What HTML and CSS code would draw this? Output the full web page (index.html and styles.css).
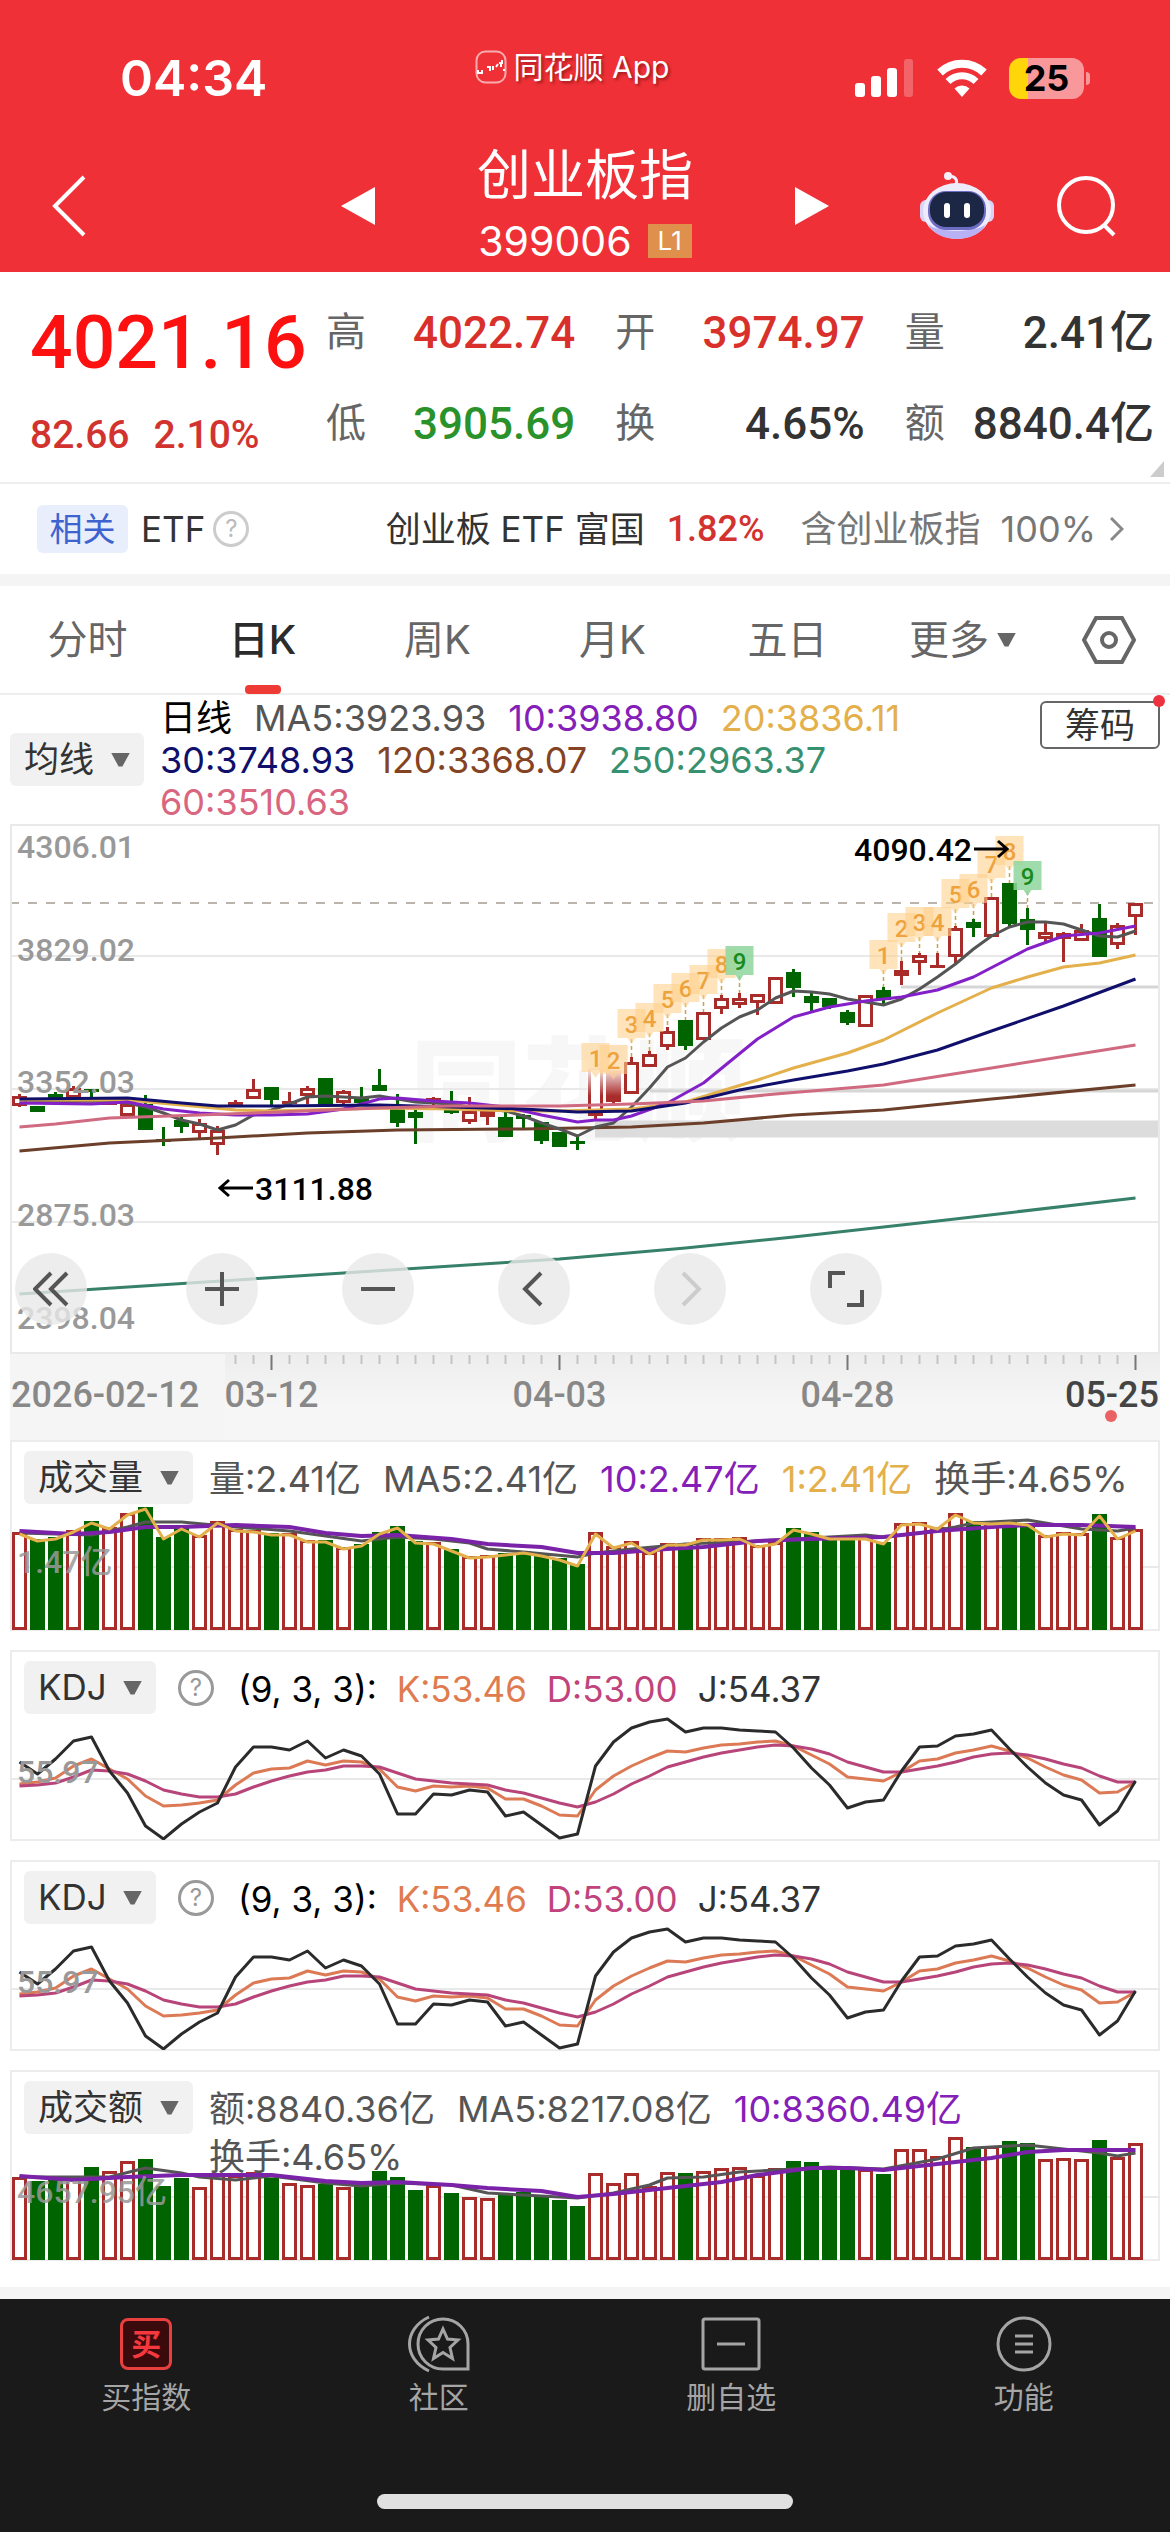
FILE: index.html
```html
<!DOCTYPE html>
<html lang="zh-CN">
<head>
    <meta charset="UTF-8">
    <meta name="viewport" content="width=device-width, initial-scale=1.0">
    <title>创业板指 399006</title>
    <link rel="stylesheet" href="styles.css">
</head>
<body>
    <header class="header">
        <div class="status-bar">
            <span class="time">04:34</span>
            <span class="app-name">
                <svg width="33" height="34" viewBox="0 0 33 34" fill="none">
                    <rect x="1.5" y="1.5" width="29" height="31" rx="9" stroke="#fff" stroke-opacity=".6" stroke-width="2"/>
                    <path d="M3 20v3h4v-3M12 17h3v4M18 16v4M21 17l2-3M24 13h3v-3M26 12v5M28 20h2" stroke="#fff" stroke-width="2"/>
                </svg>
                同花顺 App
            </span>
            <span class="status-icons">
                <svg width="60" height="38" viewBox="0 0 60 38" fill="#fff">
                    <rect x="0" y="24" width="10" height="14" rx="3"/>
                    <rect x="16" y="17" width="10" height="21" rx="3"/>
                    <rect x="32" y="9" width="10" height="29" rx="3"/>
                    <rect x="49" y="0" width="9" height="38" rx="3" fill-opacity=".25"/>
                </svg>
                <svg width="50" height="38" viewBox="0 0 50 38">
                    <path d="M3 13.5a32 32 0 0 1 44 0" fill="none" stroke="#fff" stroke-width="8"/>
                    <path d="M11 22.5a20 20 0 0 1 28 0" fill="none" stroke="#fff" stroke-width="7"/>
                    <path d="M17.500 29.500a11 11 0 0 1 15 0L25 38z" fill="#fff"/>
                </svg>
                <span class="battery">25</span>
            </span>
        </div>
        <nav class="title-bar">
            <button class="back" aria-label="返回">
                <svg width="34" height="62" viewBox="0 0 34 62" fill="none" stroke="#fff" stroke-width="4"><path d="M32 2L3 31l29 29"/></svg>
            </button>
            <button aria-label="上一个">
                <svg width="34" height="38" viewBox="0 0 34 38" fill="#fff"><path d="M34 0v38L0 19z"/></svg>
            </button>
            <div class="title">
                <h1>创业板指</h1>
                <p>399006 <span class="level">L1</span></p>
            </div>
            <button aria-label="下一个">
                <svg width="34" height="38" viewBox="0 0 34 38" fill="#fff"><path d="M0 0v38l34-19z"/></svg>
            </button>
            <div class="actions">
                <button class="robot" aria-label="智能助手">
                    <svg width="74" height="68" viewBox="0 0 74 68">
                        <path d="M35 14c4-6 0-10-7-10" fill="none" stroke="#f3eefc" stroke-width="3"/>
                        <circle cx="28" cy="4" r="4" fill="#f6f0fb"/>
                        <rect x="0" y="28" width="12" height="22" rx="6" fill="#d9d4f7"/>
                        <rect x="62" y="28" width="12" height="22" rx="6" fill="#d9d4f7"/>
                        <ellipse cx="37" cy="39" rx="34" ry="28" fill="#eeebfd"/>
                        <path d="M8 52c10 20 48 20 58 0-8 9-50 9-58 0z" fill="#b9b1f5"/>
                        <rect x="8" y="19" width="58" height="39" rx="18" fill="#6d6cc4"/>
                        <rect x="10" y="20" width="54" height="35" rx="16" fill="#1b2744"/>
                        <rect x="24" y="31" width="6" height="15" rx="3" fill="#fff"/>
                        <rect x="44" y="31" width="6" height="15" rx="3" fill="#fff"/>
                    </svg>
                </button>
                <button aria-label="搜索">
                    <svg width="62" height="62" viewBox="0 0 62 62" fill="none" stroke="#fff" stroke-width="4"><circle cx="30" cy="30" r="27"/><path d="M47 49l11 11"/></svg>
                </button>
            </div>
        </nav>
    </header>

    <main>
        <section class="quote">
            <div class="price">
                <strong>4021.16</strong>
                <p><span>82.66</span><span>2.10%</span></p>
            </div>
            <dl>
                <div><dt>高</dt><dd class="up">4022.74</dd></div>
                <div><dt>开</dt><dd class="up">3974.97</dd></div>
                <div><dt>量</dt><dd>2.41亿</dd></div>
                <div><dt>低</dt><dd class="down">3905.69</dd></div>
                <div><dt>换</dt><dd>4.65%</dd></div>
                <div><dt>额</dt><dd>8840.4亿</dd></div>
            </dl>
        </section>

        <section class="related">
            <span class="chip">相关</span>
            <span class="etf">ETF</span>
            <span class="help help-light">?</span>
            <a href="#etf" class="related-link">
                <span>创业板 ETF 富国</span>
                <span class="rise">1.82%</span>
                <span class="weight">含创业板指</span>
                <span class="weight percent">100%</span>
                <svg width="14" height="26" viewBox="0 0 14 26" fill="none" stroke="#888" stroke-width="3"><path d="M1 2l11 11L1 24"/></svg>
            </a>
        </section>

        <nav class="tabs">
            <button>分时</button>
            <button class="active">日K</button>
            <button>周K</button>
            <button>月K</button>
            <button>五日</button>
            <button class="more">更多</button>
            <button class="setting" aria-label="设置">
                <svg width="54" height="48" viewBox="0 0 54 48" fill="none" stroke="#666" stroke-width="4"><path d="M14 2h26l12 22-12 22H14L2 24z"/><circle cx="27" cy="24" r="7"/></svg>
            </button>
        </nav>

        <section class="ma-bar">
            <label class="picker"><select aria-label="主图指标"><option>均线</option></select></label>
            <p class="legend ma-legend">
                <span class="c-black">日线</span>
                <span class="c-gray">MA5:3923.93</span>
                <span class="c-purple">10:3938.80</span>
                <span class="c-yellow">20:3836.11</span>
                <span class="c-navy">30:3748.93</span>
                <span class="c-brown">120:3368.07</span>
                <span class="c-green">250:2963.37</span>
                <span class="c-pink">60:3510.63</span>
            </p>
            <button class="chips-btn">筹码</button>
        </section>

        <section class="kline">
            <svg id="kline" viewBox="0 0 1150 530"></svg>
            <div class="tools">
                <button aria-label="收起"><svg width="36" height="36" viewBox="0 0 36 36"><path d="M18 2L2 18l16 16M34 2L18 18l16 16"/></svg></button>
                <button aria-label="放大"><svg width="36" height="36" viewBox="0 0 36 36"><path d="M18 1v34M1 18h34"/></svg></button>
                <button aria-label="缩小"><svg width="36" height="36" viewBox="0 0 36 36"><path d="M1 18h34"/></svg></button>
                <button aria-label="左移"><svg width="36" height="36" viewBox="0 0 36 36"><path d="M25 2L9 18l16 16"/></svg></button>
                <button aria-label="右移" disabled><svg width="36" height="36" viewBox="0 0 36 36"><path d="M11 2l16 16-16 16"/></svg></button>
                <button aria-label="全屏"><svg width="36" height="36" viewBox="0 0 36 36"><path d="M2 17V2h15M34 19v15H19"/></svg></button>
            </div>
        </section>
        <div class="axis"><svg id="axis" viewBox="0 0 1150 86"></svg></div>

        <section class="panel">
            <svg id="volume" class="plot" viewBox="0 0 1150 190"></svg>
            <div class="panel-head">
                <label class="picker"><select aria-label="副图指标一"><option>成交量</option></select></label>
                <p class="legend">
                    <span class="c-gray">量:2.41亿</span>
                    <span class="c-gray">MA5:2.41亿</span>
                    <span class="c-purple">10:2.47亿</span>
                    <span class="c-yellow">1:2.41亿</span>
                    <span class="c-gray">换手:4.65%</span>
                </p>
            </div>
        </section>

        <section class="panel">
            <svg class="plot kdj" viewBox="0 0 1150 190"></svg>
            <div class="panel-head">
                <label class="picker"><select aria-label="副图指标二"><option>KDJ</option></select></label>
                <span class="help">?</span>
                <p class="legend kdj-legend">
                    <span class="c-black">(9, 3, 3):</span>
                    <span class="c-orange">K:53.46</span>
                    <span class="c-rose">D:53.00</span>
                    <span class="c-dark">J:54.37</span>
                </p>
            </div>
        </section>

        <section class="panel">
            <svg class="plot kdj" viewBox="0 0 1150 190"></svg>
            <div class="panel-head">
                <label class="picker"><select aria-label="副图指标三"><option>KDJ</option></select></label>
                <span class="help">?</span>
                <p class="legend kdj-legend">
                    <span class="c-black">(9, 3, 3):</span>
                    <span class="c-orange">K:53.46</span>
                    <span class="c-rose">D:53.00</span>
                    <span class="c-dark">J:54.37</span>
                </p>
            </div>
        </section>

        <section class="panel">
            <svg id="amount" class="plot" viewBox="0 0 1150 190"></svg>
            <div class="panel-head">
                <label class="picker"><select aria-label="副图指标四"><option>成交额</option></select></label>
                <p class="legend">
                    <span class="c-gray">额:8840.36亿</span>
                    <span class="c-gray">MA5:8217.08亿</span>
                    <span class="c-purple">10:8360.49亿</span>
                    <span class="c-gray">换手:4.65%</span>
                </p>
            </div>
        </section>
    </main>

    <footer class="footer">
        <nav>
            <a href="#buy">
                <span class="buy-icon">买</span>
                买指数
            </a>
            <a href="#community">
                <svg width="64" height="58" viewBox="0 0 64 58" fill="none" stroke="#a5a5a5" stroke-width="3">
                    <path d="M22 2C-4 14-4 44 22 56"/>
                    <path d="M36 4C22 4 11 15 11 29s11 25 25 25h25V29C61 15 50 4 36 4z"/>
                    <path d="M36 14l4.500 10 10.500 1-8 7.500 2.500 11-9.500-6-9.500 6 2.500-11-8-7.500 10.500-1z"/>
                </svg>
                社区
            </a>
            <a href="#remove">
                <svg width="60" height="58" viewBox="0 0 60 58" fill="none" stroke="#a5a5a5" stroke-width="3"><rect x="2" y="4" width="56" height="50" rx="2"/><path d="M16 29h28"/></svg>
                删自选
            </a>
            <a href="#features">
                <svg width="58" height="58" viewBox="0 0 58 58" fill="none" stroke="#a5a5a5" stroke-width="3"><circle cx="29" cy="29" r="26"/><path d="M20 21h18M20 29h18M20 37h18"/></svg>
                功能
            </a>
        </nav>
        <div class="home-bar"></div>
    </footer>
    <script src="script.js"></script>
</body>
</html>
```

FILE: styles.css
```css
* {
    box-sizing: border-box;
}
body {
    margin: 0;
    font-family: Inter, "Noto Sans CJK SC", sans-serif;
    background-color: #fff;
    color: #333;
}
h1, p, dl, dd {
    margin: 0;
}
button, select {
    font: inherit;
    color: inherit;
    background: none;
    border: none;
    padding: 0;
    cursor: pointer;
}
a {
    color: inherit;
    text-decoration: none;
}
svg {
    display: block;
}

/* 顶部 */
.header {
    background-color: #ef3137;
    color: #fff;
    height: 272px;
    padding-top: 52px;
}
.status-bar {
    display: grid;
    grid-template-columns: 1fr auto 1fr;
    height: 52px;
    padding: 0 86px 0 60px;
}
.time {
    padding-left: 60px;
    font-size: 50px;
    font-weight: 600;
    line-height: 52px;
}
.app-name {
    display: flex;
    gap: 6px;
    font-size: 30px;
    line-height: 30px;
    align-items: center;
    height: 30px;
    text-shadow: 2px 2px 3px rgba(80,0,0,0.5);
}
.status-icons {
    display: flex;
    justify-content: flex-end;
    align-items: center;
    gap: 22px;
}
.battery {
    position: relative;
    width: 75px;
    height: 41px;
    border-radius: 12px;
    background: linear-gradient(90deg, #ffd60a 26%, #f9989b 26%);
    color: #000;
    font-size: 36px;
    font-weight: 700;
    line-height: 41px;
    text-align: center;
}
.battery::after {
    content: "";
    position: absolute;
    right: -6px;
    top: 14px;
    width: 4px;
    height: 13px;
    border-radius: 0 4px 4px 0;
    background-color: #f9989b;
}
.title-bar {
    display: grid;
    grid-template-columns: 1fr 34px 420px 34px 1fr;
    align-items: center;
    height: 168px;
    padding: 36px 52px 0;
}
.title {
    text-align: center;
}
.title h1 {
    font-size: 54px;
    font-weight: 400;
    line-height: 70px;
}
.title p {
    display: flex;
    justify-content: center;
    align-items: center;
    gap: 16px;
    font-size: 41px;
    line-height: 60px;
}
.level {
    background-color: #e0904d;
    font-size: 26px;
    line-height: 34px;
    padding: 0 10px;
}
.actions {
    display: flex;
    justify-content: flex-end;
    align-items: center;
    gap: 62px;
}

/* 行情 */
.quote {
    position: relative;
    display: flex;
    gap: 24px;
    height: 212px;
    padding: 24px 16px 0 30px;
    border-bottom: 2px solid #eee;
    font-family: Roboto, "Noto Sans CJK SC", sans-serif;
    font-weight: 500;
}
.quote::after {
    content: "";
    position: absolute;
    right: 6px;
    bottom: 5px;
    width: 14px;
    height: 16px;
    background-color: #ccc;
    clip-path: polygon(100% 0, 100% 100%, 0 100%);
}
.price {
    width: 272px;
    color: #d2332f;
}
.price strong {
    display: block;
    font-size: 75px;
    font-weight: 500;
    line-height: 92px;
    color: #fc1010;
}
.price p {
    display: flex;
    gap: 24px;
    font-size: 39px;
    line-height: 94px;
}
.quote dl {
    flex: 1;
    display: grid;
    grid-template-columns: repeat(3, 1fr);
    grid-auto-rows: 91px;
    column-gap: 40px;
}
.quote dl div {
    display: flex;
    justify-content: space-between;
    line-height: 74px;
}
.quote dt {
    font-size: 40px;
    font-weight: 400;
    color: #666;
}
.quote dd {
    font-size: 44px;
    white-space: nowrap;
}
.quote .up {
    color: #d9302c;
}
.quote .down {
    color: #2a922a;
}

/* 相关ETF */
.related {
    display: flex;
    align-items: center;
    height: 90px;
    padding: 0 46px 0 37px;
    font-size: 35px;
    line-height: 48px;
}
.chip {
    background-color: #e8eefc;
    color: #3d63cf;
    border-radius: 6px;
    width: 91px;
    text-align: center;
    font-size: 33px;
}
.etf {
    margin-left: 13px;
}
.help {
    width: 36px;
    height: 36px;
    border: 3px solid #999;
    border-radius: 50%;
    color: #999;
    font-size: 24px;
    line-height: 30px;
    text-align: center;
}
.help-light {
    border-color: #ccc;
    color: #bbb;
    margin-left: 8px;
}
.related-link {
    margin-left: auto;
    display: flex;
    align-items: center;
    gap: 14px;
}
.related-link .rise {
    font-family: Roboto, sans-serif;
    font-size: 36px;
    font-weight: 500;
    color: #d2332f;
    margin: 0 22px 0 8px;
}
.weight {
    font-size: 36px;
    color: #777;
}
.percent {
    margin-left: 6px;
}

/* 周期 */
.tabs {
    display: grid;
    grid-template-columns: repeat(6, 1fr) 86px;
    align-items: center;
    height: 121px;
    padding-right: 34px;
    border-top: 12px solid #f4f4f4;
    border-bottom: 2px solid #eee;
    font-size: 40px;
    line-height: 60px;
    color: #666;
}
.tabs .active {
    position: relative;
    color: #2b2b2b;
    font-weight: 500;
}
.tabs .active::after {
    content: "";
    position: absolute;
    left: calc(50% - 18px);
    bottom: -24px;
    width: 36px;
    height: 9px;
    border-radius: 4px;
    background-color: #ee3b35;
}
.tabs .more {
    display: flex;
    align-items: center;
    justify-content: center;
    gap: 8px;
}
.tabs .setting {
    justify-self: end;
}
.tabs .more::after, .picker::after {
    content: "";
    width: 19px;
    height: 14px;
    background-color: #666;
    clip-path: polygon(0 0, 100% 0, 60% 100%, 40% 100%);
}

/* 指标图例 */
.picker {
    position: relative;
    flex: none;
    display: flex;
    align-items: center;
    background-color: #f1f1f1;
    border-radius: 6px;
    height: 53px;
}
.picker select {
    appearance: none;
    font-size: 35px;
    line-height: 53px;
    height: 53px;
    padding: 0 49px 0 14px;
    color: #333;
}
.picker::after {
    position: absolute;
    right: 14px;
    pointer-events: none;
}
.legend {
    display: flex;
    flex-wrap: wrap;
    column-gap: 22px;
    font-size: 36px;
    line-height: 48px;
    white-space: nowrap;
}
.ma-bar {
    display: flex;
    align-items: center;
    padding: 0 10px;
    height: 129px;
}
.ma-legend {
    flex: 1;
    margin: 0 30px 0 16px;
    line-height: 42px;
}
.kdj-legend {
    column-gap: 20px;
    font-size: 35px;
}
.chips-btn {
    position: relative;
    align-self: flex-start;
    margin-top: 6px;
    width: 120px;
    height: 48px;
    border: 2px solid #666;
    border-radius: 6px;
    font-size: 35px;
    line-height: 44px;
}
.chips-btn::after {
    content: "";
    position: absolute;
    right: -7px;
    top: -8px;
    width: 12px;
    height: 12px;
    border-radius: 50%;
    background-color: #ee3340;
}
.c-black { color: #000; }
.c-dark { color: #333; }
.c-gray { color: #555; }
.c-purple { color: #8420b8; }
.c-yellow { color: #e3b04b; }
.c-navy { color: #10106c; }
.c-brown { color: #844322; }
.c-green { color: #37906f; }
.c-pink { color: #d9657f; }
.c-orange { color: #e07b4f; }
.c-rose { color: #c0437b; }

/* 图表 */
.kline {
    position: relative;
    margin: 0 10px;
    outline: 2px solid #e9e9e9;
    outline-offset: -2px;
}
.kline > svg, .axis svg {
    width: 100%;
    height: auto;
}
.tools {
    position: absolute;
    left: 5px;
    bottom: 29px;
    display: flex;
    gap: 84px;
}
.tools button {
    width: 72px;
    height: 72px;
    border-radius: 50%;
    background-color: rgba(232,232,232,0.8);
    display: flex;
    align-items: center;
    justify-content: center;
}
.tools button:first-child {
    margin-right: 15px;
}
.tools svg {
    fill: none;
    stroke: #555;
    stroke-width: 4;
}
.tools button:disabled svg {
    stroke: #ccc;
}
.axis {
    margin: 0 10px;
    background: linear-gradient(#ededed, #f6f6f6 60%);
}
.panel {
    position: relative;
    margin: 0 10px 19px;
    min-height: 191px;
    border: 2px solid #ececec;
}
.plot {
    position: absolute;
    left: -2px;
    top: -2px;
    width: calc(100% + 4px);
}
.panel-head {
    position: relative;
    display: flex;
    align-items: flex-start;
    gap: 16px;
    padding: 9px 0 0 12px;
}
.panel-head .help {
    margin: 9px 8px 0 6px;
}
.panel-head .legend {
    padding-top: 4px;
}
text {
    font-family: Roboto, "Noto Sans CJK SC", sans-serif;
    font-weight: 500;
}

/* 底部 */
.footer {
    margin-top: 26px;
    border-top: 12px solid #f4f4f4;
    background-color: #1a1a1a;
    color: #a5a5a5;
    height: 246px;
    display: flex;
    flex-direction: column;
    justify-content: space-between;
    align-items: center;
    padding: 16px 0 24px;
}
.footer nav {
    width: 100%;
    display: grid;
    grid-template-columns: repeat(4, 1fr);
}
.footer a {
    display: flex;
    flex-direction: column;
    align-items: center;
    gap: 2px;
    font-size: 30px;
    line-height: 44px;
}
.buy-icon {
    width: 52px;
    height: 52px;
    margin: 3px 0;
    border: 3px solid #e8403f;
    border-radius: 8px;
    background-color: #3a0a0c;
    color: #f5383e;
    font-size: 30px;
    font-weight: 700;
    line-height: 46px;
    text-align: center;
}
.home-bar {
    width: 416px;
    height: 15px;
    border-radius: 8px;
    background-color: #e0e0e0;
}
```

FILE: script.js
```js
const NS = 'http://www.w3.org/2000/svg';
const STEP = 18;
const RED = '#a82c2a';
const GREEN = '#006400';
const GRAY = '#555';
const PURPLE = '#7a22a8';
const YELLOW = '#e3b04b';

// r = 涨, g = 跌
const COLORS = 'rggrgrrgggrrrrgrrgrgggg' + 'rgrrgggggrrrrrgrrrrrggggrgrrrrgrggrrrgrr';

// 每根K线: 最高, 实体上沿, 实体下沿, 最低
const candles = [
    [270, 272, 282, 283], [282, 282, 288, 288], [268, 270, 275, 275], [262, 264, 274, 274],
    [265, 265, 268, 273], [278, 278, 280, 281], [279, 280, 292, 293], [271, 280, 306, 306],
    [303, 315, 318, 322], [291, 296, 303, 309], [295, 299, 309, 314], [302, 306, 321, 331],
    [276, 278, 283, 283], [255, 265, 275, 275], [263, 263, 276, 281], [268, 277, 280, 281],
    [262, 264, 272, 280], [254, 254, 281, 281], [266, 267, 279, 281], [263, 273, 279, 279],
    [245, 261, 267, 267], [270, 283, 299, 303], [284, 288, 294, 320], [273, 274, 279, 285],
    [267, 286, 289, 290], [273, 287, 298, 300], [285, 287, 293, 301], [288, 293, 313, 313],
    [290, 291, 295, 304], [298, 298, 317, 320], [308, 308, 323, 323], [313, 317, 319, 326],
    [243, 243, 292, 296], [246, 246, 278, 280], [233, 238, 270, 270], [227, 230, 243, 243],
    [203, 207, 223, 226], [196, 196, 222, 226], [188, 188, 216, 216], [171, 174, 185, 190],
    [169, 174, 181, 184], [170, 170, 179, 191], [153, 153, 180, 180], [145, 148, 164, 173],
    [169, 172, 179, 189], [174, 174, 183, 185], [186, 188, 199, 201], [171, 171, 203, 203],
    [163, 166, 176, 181], [137, 146, 152, 161], [129, 131, 139, 151], [129, 141, 144, 144],
    [102, 104, 133, 139], [95, 98, 104, 113], [73, 73, 113, 113], [59, 59, 100, 103],
    [84, 95, 106, 121], [97, 108, 115, 118], [108, 109, 115, 138], [100, 106, 117, 117],
    [80, 94, 133, 133], [99, 101, 121, 125], [79, 79, 93, 111]
];

// 均线: [序号, y]
const ma = [
    ['#6b3f2a', [[0, 327], [5, 319], [11, 314], [16, 309], [21, 306], [28, 305], [34, 303], [38, 299], [43, 291], [48, 286], [54, 275], [62, 261]]],
    ['#37806a', [[0, 470], [18, 449], [30, 435], [37, 424], [43, 413], [51, 397], [62, 374]]],
    [GRAY, [[0, 279], [4, 277], [6, 279], [7, 283], [8, 289], [9, 296], [10, 300], [11, 306], [12, 301], [13, 291], [14, 286], [15, 280], [16, 273], [17, 272], [19, 274], [20, 272], [21, 275], [22, 278], [24, 280], [25, 283], [27, 287], [28, 292], [29, 299], [30, 305], [31, 312], [32, 303], [33, 299], [34, 283], [35, 264], [36, 243], [37, 234], [38, 218], [39, 204], [40, 193], [41, 186], [42, 174], [43, 167], [44, 168], [45, 170], [46, 175], [47, 178], [48, 181], [49, 175], [50, 165], [51, 153], [52, 140], [53, 125], [54, 112], [55, 103], [56, 98], [57, 98], [58, 100], [59, 106], [60, 112], [61, 113], [62, 107]]],
    [YELLOW, [[0, 276], [6, 276], [9, 281], [12, 286], [14, 287], [18, 285], [20, 284], [24, 285], [28, 287], [30, 287], [34, 285], [37, 278], [41, 256], [43, 244], [46, 229], [48, 216], [51, 189], [54, 164], [56, 153], [58, 143], [60, 139], [62, 131]]],
    ['#8420c8', [[0, 279], [4, 280], [6, 278], [8, 285], [10, 289], [12, 291], [14, 291], [16, 290], [18, 285], [20, 275], [21, 274], [23, 277], [25, 279], [27, 283], [29, 291], [31, 298], [32, 296], [33, 296], [34, 292], [36, 279], [38, 259], [41, 215], [43, 193], [45, 183], [47, 177], [49, 173], [51, 166], [53, 153], [56, 125], [58, 112], [60, 109], [62, 102]]],
    ['#10106c', [[0, 275], [6, 274], [9, 279], [11, 282], [14, 282], [20, 281], [24, 283], [28, 285], [31, 288], [34, 287], [37, 279], [40, 266], [43, 256], [46, 247], [48, 240], [51, 226], [54, 207], [58, 182], [62, 155]]],
    ['#d06a80', [[0, 303], [2, 300], [5, 294], [10, 291], [13, 289], [20, 284], [24, 282], [30, 282], [34, 280], [38, 277], [42, 270], [48, 261], [54, 244], [62, 221]]]
];

// 九转: 序号, 数字, 标签顶部
const turns = [
    [32, 1, 219], [33, 2, 221], [34, 3, 185], [35, 4, 179], [36, 5, 160], [37, 6, 149], [38, 7, 141], [39, 8, 125], [40, 9, 122],
    [48, 1, 116], [49, 2, 89], [50, 3, 83], [51, 4, 83], [52, 5, 55], [53, 6, 50], [54, 7, 25], [55, 8, 12], [56, 9, 37]
];

const volumeTops = [
    92, 99, 97, 90, 81, 87, 73, 67, 97, 87, 95, 81, 89, 90, 93, 93, 100, 100, 107, 104, 92,
    86, 101, 102, 109, 116, 115, 113, 111, 114, 118, 124, 92, 106, 101, 112, 103, 103, 98, 98, 97, 105,
    102, 88, 92, 97, 97, 97, 102, 83, 82, 87, 73, 81, 82, 81, 83, 95, 92, 93, 74, 97, 89
];
const volumeMa5 = [[0, 93], [4, 95], [6, 87], [7, 82], [9, 82], [12, 87], [15, 91], [19, 101], [21, 97], [23, 99], [25, 103], [26, 109], [28, 112], [31, 117], [32, 113], [34, 109], [37, 104], [41, 101], [45, 97], [47, 95], [48, 97], [50, 93], [52, 87], [53, 83], [56, 80], [59, 89], [61, 91], [62, 88]];
const volumeMa10 = [[0, 91], [3, 94], [5, 92], [7, 87], [9, 87], [12, 85], [15, 87], [17, 93], [19, 96], [21, 95], [24, 99], [26, 104], [29, 107], [31, 113], [33, 113], [36, 109], [38, 107], [41, 101], [44, 99], [48, 97], [51, 91], [54, 87], [56, 85], [59, 85], [62, 87]];

const amountTops = [
    107, 111, 109, 106, 97, 101, 91, 89, 116, 108, 117, 103, 105, 102, 108, 113, 115, 114, 117, 112, 101,
    107, 120, 115, 123, 127, 128, 124, 122, 126, 130, 136, 103, 113, 103, 116, 102, 103, 101, 98, 97, 105,
    98, 91, 92, 100, 100, 99, 104, 79, 79, 86, 67, 77, 76, 71, 73, 89, 88, 89, 70, 87, 73
];
const amountMa5 = [[0, 107], [5, 107], [7, 98], [9, 103], [10, 107], [12, 110], [14, 106], [17, 113], [19, 116], [21, 113], [24, 115], [26, 123], [29, 126], [31, 128], [33, 123], [35, 115], [36, 108], [38, 107], [40, 102], [42, 100], [45, 97], [48, 99], [51, 89], [53, 78], [56, 75], [58, 79], [60, 83], [61, 86], [62, 83]];
const amountMa10 = [[0, 106], [3, 110], [6, 107], [9, 105], [14, 105], [17, 111], [19, 113], [21, 112], [24, 115], [26, 118], [29, 121], [31, 127], [33, 124], [36, 118], [39, 112], [41, 105], [44, 98], [46, 98], [48, 100], [51, 94], [54, 88], [56, 82], [58, 80], [62, 80]];

const kdjJ = [112, 124, 109, 91, 87, 121, 143, 176, 189, 174, 162, 153, 117, 97, 97, 100, 91, 108, 100, 106, 124, 164, 164, 144, 145, 140, 142, 166, 162, 175, 188, 184, 116, 92, 78, 72, 69, 82, 78, 78, 80, 81, 82, 98, 118, 135, 158, 152, 150, 121, 97, 96, 86, 84, 80, 99, 117, 133, 145, 150, 175, 161, 131];
const kdjK = [134, 132, 128, 116, 109, 119, 129, 146, 156, 155, 153, 150, 135, 123, 119, 118, 111, 115, 111, 112, 119, 137, 141, 136, 137, 136, 138, 149, 149, 156, 165, 166, 140, 126, 116, 108, 101, 102, 98, 95, 94, 92, 91, 96, 105, 114, 127, 129, 131, 122, 111, 109, 103, 100, 96, 101, 108, 117, 125, 130, 143, 142, 132];
const kdjD = [136, 135, 133, 127, 120, 121, 124, 131, 140, 144, 147, 147, 144, 137, 131, 126, 122, 120, 116, 116, 117, 123, 129, 131, 133, 134, 135, 140, 143, 148, 153, 157, 152, 144, 134, 126, 117, 112, 107, 103, 100, 97, 95, 96, 99, 104, 112, 117, 122, 122, 119, 116, 112, 107, 104, 103, 105, 109, 114, 118, 126, 132, 132];

function el(parent, name, attrs, text) {
    const node = document.createElementNS(NS, name);
    for (const key in attrs) {
        node.setAttribute(key, attrs[key]);
    }
    if (text !== undefined) {
        node.textContent = text;
    }
    parent.appendChild(node);
    return node;
}

function xAt(i) {
    return 9.5 + i * STEP;
}

function hline(svg, y, x = 0, color = '#e9e9e9', width = 2) {
    el(svg, 'path', { d: `M${x} ${y}H1150`, stroke: color, 'stroke-width': width });
}

function line(svg, points, color, width = 3) {
    const list = points.map(p => `${xAt(p[0])},${p[1]}`).join(' ');
    el(svg, 'polyline', { points: list, fill: 'none', stroke: color, 'stroke-width': width, 'stroke-linejoin': 'round' });
}

function label(svg, x, y, text, color = '#999', size = 32) {
    return el(svg, 'text', { x, y, fill: color, 'font-size': size }, text);
}

function box(svg, i, top, bottom, red) {
    const x = xAt(i) - 7.5;
    const h = bottom - top;
    if (red && h > 5) {
        el(svg, 'rect', { x: x + 1.5, y: top + 1.5, width: 12, height: h - 3, fill: '#fff', stroke: RED, 'stroke-width': 3 });
    } else {
        el(svg, 'rect', { x, y: top, width: 15, height: Math.max(h, 3), fill: red ? RED : GREEN });
    }
}

function drawKline() {
    const svg = document.getElementById('kline');
    const defs = el(svg, 'defs', {});
    const fade = el(defs, 'linearGradient', { id: 'fade', x1: 0, y1: 0, x2: 0, y2: 1 });
    el(fade, 'stop', { offset: 0, 'stop-color': '#fff' });
    el(fade, 'stop', { offset: 1, 'stop-color': '#fff', 'stop-opacity': 0 });

    label(svg, 400, 308, '同花顺', '#f7f7f7', 112).setAttribute('style', 'font-weight:900');
    [132, 265, 398].forEach(y => hline(svg, y));
    hline(svg, 163, 891, '#d6d6d6', 3);
    hline(svg, 267, 640, '#d6d6d6', 3);
    hline(svg, 305, 585, '#dcdcdc', 17);
    el(svg, 'path', { d: 'M0 79H1150', stroke: '#a49c92', 'stroke-width': 1.5, 'stroke-dasharray': '9 9' });

    turns.forEach(([i, n, top]) => {
        el(svg, 'path', { d: `M${xAt(i)} ${top + 30}V${candles[i][0]}`, stroke: '#c9a24e', 'stroke-width': 1.5, 'stroke-dasharray': '4 3' });
    });
    candles.forEach(([high, top, bottom, low], i) => {
        const red = COLORS[i] === 'r';
        el(svg, 'path', { d: `M${xAt(i)} ${high}V${low}`, stroke: red ? RED : GREEN, 'stroke-width': 3 });
        box(svg, i, top, bottom, red);
    });
    el(svg, 'rect', { x: xAt(33) - 7, y: 247, width: 14, height: 30, fill: RED });
    el(svg, 'rect', { x: xAt(32) - 9, y: 242, width: 36, height: 30, fill: 'url(#fade)' });
    ma.forEach(([color, points]) => line(svg, points, color));

    turns.forEach(([i, n, top]) => {
        const x = xAt(i);
        const done = n === 9;
        el(svg, 'path', {
            d: `M${x - 14} ${top}h28v29h-10l-4 6-4-6h-10z`,
            fill: done ? '#8fd69c' : '#ffd08e',
            'fill-opacity': done ? 0.85 : 0.6
        });
        label(svg, x, top + 24, n, done ? '#178a1c' : '#eda23c', 24).setAttribute('text-anchor', 'middle');
    });

    [['4306.01', 34], ['3829.02', 137], ['3352.03', 269], ['2875.03', 402], ['2398.04', 505]].forEach(([t, y]) => label(svg, 7, y, t));
    label(svg, 844, 37, '4090.42', '#000');
    el(svg, 'path', { d: 'M964 25h33M988 17l9 8-9 8', fill: 'none', stroke: '#000', 'stroke-width': 3 });
    label(svg, 245, 376, '3111.88', '#000');
    el(svg, 'path', { d: 'M243 364h-33M219 356l-9 8 9 8', fill: 'none', stroke: '#000', 'stroke-width': 3 });
}

function drawAxis() {
    const svg = document.getElementById('axis');
    el(svg, 'rect', { x: 0, y: 0, width: 215, height: 86, fill: '#f5f5f5' });
    for (let i = 12; i < 63; i++) {
        const major = (i - 14) % 16 === 0;
        el(svg, 'path', { d: `M${xAt(i)} 1v${major ? 15 : 9}`, stroke: major ? '#777' : '#c4c4c4', 'stroke-width': 2 });
    }
    label(svg, 1, 53, '2026-02-12', '#888', 36);
    [['03-12', 14], ['04-03', 30], ['04-28', 46]].forEach(([t, i]) => {
        label(svg, xAt(i), 53, t, '#888', 36).setAttribute('text-anchor', 'middle');
    });
    label(svg, 1149, 53, '05-25', '#444', 36).setAttribute('text-anchor', 'end');
    el(svg, 'circle', { cx: 1101, cy: 62, r: 6, fill: '#ea6264' });
}

function drawBars(id, tops, ma5, ma10, text) {
    const svg = document.getElementById(id);
    hline(svg, 127);
    tops.forEach((top, i) => box(svg, i, top, 190, COLORS[i] === 'r'));
    line(svg, ma5, GRAY);
    line(svg, ma10, PURPLE, 4);
    if (id === 'volume') {
        line(svg, tops.map((y, i) => [i, y + 2]), YELLOW);
    }
    label(svg, 7, 133, text).setAttribute('opacity', 0.85);
}

function drawKdj(svg) {
    hline(svg, 129);
    line(svg, kdjK.map((y, i) => [i, y]), '#dc7a55');
    line(svg, kdjD.map((y, i) => [i, y]), '#b8457a');
    line(svg, kdjJ.map((y, i) => [i, y]), '#2b2b2b');
    label(svg, 7, 133, '55.97');
}

drawKline();
drawAxis();
drawBars('volume', volumeTops, volumeMa5, volumeMa10, '1.47亿');
drawBars('amount', amountTops, amountMa5, amountMa10, '4657.95亿');
document.querySelectorAll('.kdj').forEach(drawKdj);
```
